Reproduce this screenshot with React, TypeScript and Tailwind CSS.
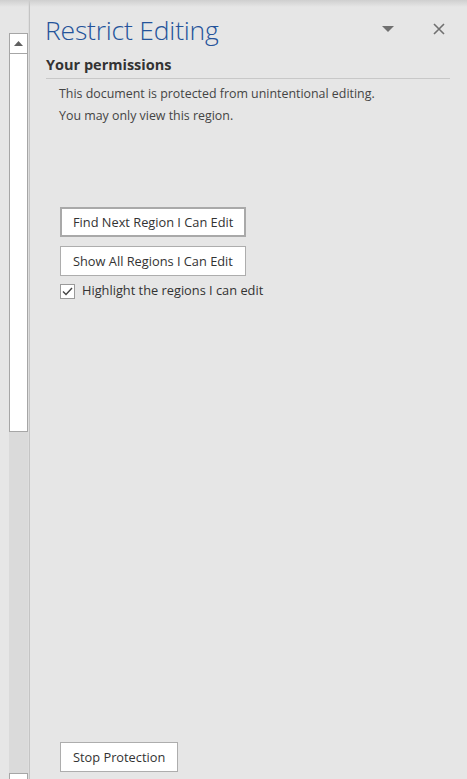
import React from "react";

const font = { fontFamily: '"Open Sans", "Noto Sans", sans-serif' };

function Btn({ children, primary }: { children: React.ReactNode; primary?: boolean }) {
  return (
    <button
      className={
        primary
          ? "h-[30px] self-start bg-white border-2 border-[#a9a9a9] px-[11px] text-[12.8px] text-[#333] leading-none"
          : "h-[30px] self-start bg-white border border-[#adadad] px-[12px] text-[12.8px] text-[#333] leading-none"
      }
    >
      {children}
    </button>
  );
}

export default function App() {
  return (
    <div className="relative w-[467px] h-[779px] overflow-hidden bg-[#e6e6e6] flex" style={font}>
      <div className="absolute top-0 left-0 right-0 h-[7px] bg-gradient-to-b from-[#cfcfcf] to-transparent pointer-events-none" />
      <div className="w-[9px] shrink-0" />
      {/* scrollbar */}
      <div className="w-[19px] shrink-0 flex flex-col">
        <div className="h-[33px]" />
        <div className="h-[21px] bg-white border border-[#a6a6a6] flex items-center justify-center">
          <svg width="9" height="5" viewBox="0 0 9 5">
            <path d="M0 5 L4.5 0 L9 5 Z" fill="#606060" />
          </svg>
        </div>
        <div className="h-[378px] bg-white border border-t-0 border-[#a6a6a6]" />
        <div className="flex-1 bg-[#dadada]" />
        <div className="h-[6px] bg-white border border-b-0 border-[#a6a6a6]" />
      </div>
      <div className="w-[1px] shrink-0 bg-[#dedede]" />
      <div className="w-[1px] shrink-0 bg-[#c4c4c4]" />
      {/* panel */}
      <div className="flex-1 flex flex-col pl-[15px] pr-[17px] pb-[7px]">
        <div className="flex items-start h-[54px]">
          <div className="flex-1 pt-[12px] text-[26.5px] leading-[36px] font-light text-[#24539a] tracking-[-0.2px]">
            Restrict Editing
          </div>
          <svg className="mt-[26px] mr-[39px]" width="12" height="6" viewBox="0 0 12 6">
            <path d="M0 0 L12 0 L6 6 Z" fill="#707070" />
          </svg>
          <svg className="mt-[23px] mr-[5px]" width="12" height="12" viewBox="0 0 12 12">
            <path d="M1 1 L11 11 M11 1 L1 11" stroke="#707070" strokeWidth="1.6" />
          </svg>
        </div>
        <div className="ml-[1px] pb-[2px] border-b border-[#c8c8c8] text-[14.5px] leading-[22px] font-bold text-[#333]">
          Your permissions
        </div>
        <div className="pl-[14px] pt-[4px] text-[12.4px] leading-[22px] text-[#444]">
          <div>This document is protected from unintentional editing.</div>
          <div>You may only view this region.</div>
        </div>
        <div className="flex flex-col pl-[15px] mt-[80px]">
          <Btn primary>Find Next Region I Can Edit</Btn>
          <div className="h-[9px]" />
          <Btn>Show All Regions I Can Edit</Btn>
          <label className="flex items-center mt-[7px] h-[16px] text-[12.8px] text-[#333]">
            <span className="w-[15px] h-[15px] bg-white border border-[#9a9a9a] flex items-center justify-center mr-[7px]">
              <svg width="11" height="9" viewBox="0 0 11 9">
                <path d="M1 4.5 L4 7.5 L10 1" stroke="#444" strokeWidth="1.4" fill="none" />
              </svg>
            </span>
            Highlight the regions I can edit
          </label>
        </div>
        <div className="flex-1" />
        <div className="pl-[15px] flex">
          <Btn>Stop Protection</Btn>
        </div>
      </div>
    </div>
  );
}
